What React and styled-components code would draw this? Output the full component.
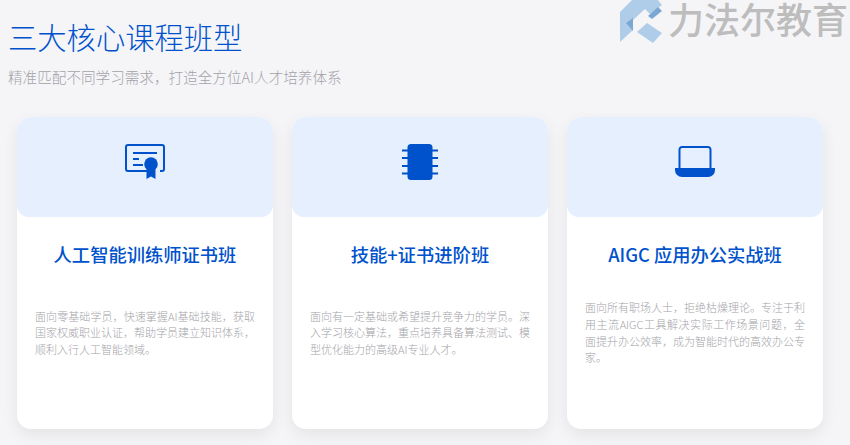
import styled, { createGlobalStyle } from "styled-components";

const GlobalStyle = createGlobalStyle`
  html, body {
    margin: 0;
    padding: 0;
    background: #f5f5f8;
  }
  body {
    font-family: "Noto Sans CJK SC", "Noto Sans", sans-serif;
  }
`;

const Page = styled.div`
  position: relative;
  width: 850px;
  height: 445px;
  overflow: hidden;
  padding: 14px 27px 0 8px;
  box-sizing: border-box;
`;

const Heading = styled.h1`
  margin: 0;
  font-size: 29.3px;
  line-height: 44px;
  font-weight: 300;
  color: #0052cc;
`;

const Subheading = styled.p`
  margin: 8px 0 0;
  font-size: 14.6px;
  line-height: 22px;
  font-weight: 300;
  color: #a3a3a8;
`;

const CardRow = styled.div`
  display: grid;
  grid-template-columns: repeat(3, 256px);
  gap: 19px;
  margin: 29px 0 0 9px;
`;

const Card = styled.div`
  display: flex;
  flex-direction: column;
  height: 312px;
  background: #fff;
  border-radius: 14px;
  box-shadow: 0 6px 16px rgba(0, 0, 0, 0.07);
  overflow: hidden;
`;

const IconBand = styled.div`
  display: flex;
  align-items: center;
  justify-content: center;
  height: 100px;
  padding-bottom: 11px;
  box-sizing: border-box;
  background: #e6effd;
  border-radius: 14px 14px 12px 12px;
`;

const CardTitle = styled.h2`
  margin: 23px 0 0;
  text-align: center;
  font-size: 18.3px;
  line-height: 28px;
  font-weight: 500;
  color: #0052cc;
`;

const CardBody = styled.div`
  flex: 1;
  display: flex;
  align-items: center;
  padding: 0 18px 32px;
`;

const Description = styled.p`
  margin: 0;
  font-size: 11px;
  line-height: 16.6px;
  font-weight: 300;
  text-align: justify;
  color: #a4a4a9;
`;

const Brand = styled.div`
  position: absolute;
  top: 0;
  left: 619px;
  display: flex;
  align-items: flex-start;
  gap: 5px;
`;

const BrandName = styled.span`
  font-size: 36px;
  line-height: 36px;
  font-weight: 500;
  color: #bdbdbd;
  white-space: nowrap;
`;

function BrandMark() {
  return (
    <svg width="44" height="44" viewBox="619 0 44 44" aria-hidden="true">
      <path d="M620 12 L633 -1 L657 -1 L662 5 L650 14 L645 9 L633 20 L633 30 L620 42 Z" fill="#afcde8" />
      <path d="M626 23 L633 18 L633 31 Z" fill="#7ba7d4" />
      <path d="M637 32 L647 23 L662 33 L653 43 Z" fill="#afcde8" />
      <path d="M648 16 L658 7 L662 11 L652 19 Z" fill="#7ba7d4" />
    </svg>
  );
}

function CertificateIcon() {
  return (
    <svg width="40" height="36" viewBox="0 0 40 36" fill="none" aria-hidden="true">
      <path d="M26 27 H3 a2 2 0 0 1 -2 -2 V3 a2 2 0 0 1 2 -2 H37 a2 2 0 0 1 2 2 V25 a2 2 0 0 1 -2 2 H35" stroke="#0052cc" strokeWidth="2" />
      <path d="M8 9 H32 M8 15 H14 M8 21 H18" stroke="#0052cc" strokeWidth="2" />
      <circle cx="26" cy="20" r="6.8" fill="#0052cc" />
      <path d="M21.5 24 V35 L26 32.5 L30.5 35 V24 Z" fill="#0052cc" />
    </svg>
  );
}

function ChipIcon() {
  return (
    <svg width="36" height="36" viewBox="0 0 36 36" fill="none" aria-hidden="true">
      <rect x="5.5" y="0" width="25" height="36" rx="3.5" fill="#0052cc" />
      <path d="M0 6.5 H36 M0 14 H36 M0 22 H36 M0 29.5 H36" stroke="#0052cc" strokeWidth="2" />
    </svg>
  );
}

function LaptopIcon() {
  return (
    <svg width="40" height="32" viewBox="0 0 40 32" fill="none" aria-hidden="true">
      <path d="M4.5 22 V3.5 a2.5 2.5 0 0 1 2.5 -2.5 H33 a2.5 2.5 0 0 1 2.5 2.5 V22" stroke="#0052cc" strokeWidth="2" />
      <path d="M0 22 H40 V24 a7 7 0 0 1 -7 7 H7 a7 7 0 0 1 -7 -7 Z" fill="#0052cc" />
    </svg>
  );
}

const courses = [
  {
    title: "人工智能训练师证书班",
    icon: <CertificateIcon />,
    text: "面向零基础学员，快速掌握AI基础技能，获取国家权威职业认证，帮助学员建立知识体系，顺利入行人工智能领域。",
  },
  {
    title: "技能+证书进阶班",
    icon: <ChipIcon />,
    text: "面向有一定基础或希望提升竞争力的学员。深入学习核心算法，重点培养具备算法测试、模型优化能力的高级AI专业人才。",
  },
  {
    title: "AIGC 应用办公实战班",
    icon: <LaptopIcon />,
    text: "面向所有职场人士，拒绝枯燥理论。专注于利用主流AIGC工具解决实际工作场景问题，全面提升办公效率，成为智能时代的高效办公专家。",
  },
];

export default function App() {
  return (
    <Page>
      <GlobalStyle />
      <Heading>三大核心课程班型</Heading>
      <Subheading>精准匹配不同学习需求，打造全方位AI人才培养体系</Subheading>
      <CardRow>
        {courses.map((course) => (
          <Card key={course.title}>
            <IconBand>{course.icon}</IconBand>
            <CardTitle>{course.title}</CardTitle>
            <CardBody>
              <Description>{course.text}</Description>
            </CardBody>
          </Card>
        ))}
      </CardRow>
      <Brand>
        <BrandMark />
        <BrandName>力法尔教育</BrandName>
      </Brand>
    </Page>
  );
}
